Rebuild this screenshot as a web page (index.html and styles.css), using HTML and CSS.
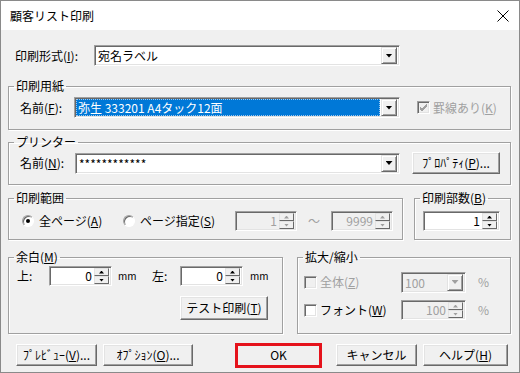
FILE: index.html
```html
<!DOCTYPE html>
<html lang="ja">
<head>
<meta charset="utf-8">
<title>顧客リスト印刷</title>
<link rel="stylesheet" href="styles.css">
</head>
<body>
<div class="window">
  <div class="titlebar">
    <span class="title">顧客リスト印刷</span>
    <svg class="close" width="12" height="12" viewBox="0 0 12 12"><path d="M0.5 0.5L11.5 11.5M11.5 0.5L0.5 11.5" stroke="#000" stroke-width="1"/></svg>
  </div>
  <div class="content">
    <div class="row row-format">
      <span class="lbl lbl-format">印刷形式(<u>I</u>):</span>
      <div class="combo w-format"><span class="combo-text">宛名ラベル</span><span class="drop"><i class="tri-down"></i></span></div>
    </div>

    <fieldset class="group g-paper">
      <legend>印刷用紙</legend>
      <div class="group-body row body-paper">
        <span class="lbl lbl-name">名前(<u>F</u>):</span>
        <div class="combo w-name1"><span class="combo-text selected">弥生 333201 A4タック12面</span><span class="drop"><i class="tri-down"></i></span></div>
        <div class="check disabled ml-check"><span class="box"><svg width="9" height="9" viewBox="0 0 9 9"><path d="M1 4l2 2 5-5M1 5l2 2 5-5M1 6l2 2 5-5" stroke="#a0a0a0" stroke-width="1" fill="none"/></svg></span><span class="check-lbl">罫線あり(<u>K</u>)</span></div>
      </div>
    </fieldset>

    <fieldset class="group g-printer">
      <legend>プリンター</legend>
      <div class="group-body row body-printer">
        <span class="lbl lbl-name2">名前(<u>N</u>):</span>
        <div class="combo w-name2"><span class="combo-text">************</span><span class="drop"><i class="tri-down"></i></span></div>
        <div class="btn btn-prop">ﾌﾟﾛﾊﾟﾃｨ(<u>P</u>)...</div>
      </div>
    </fieldset>

    <div class="row-groups row3">
      <fieldset class="group g-range">
        <legend>印刷範囲</legend>
        <div class="group-body row body-range">
          <div class="radio-item item1"><span class="radio checked"></span><span class="radio-lbl">全ページ(<u>A</u>)</span></div>
          <div class="radio-item item2"><span class="radio"></span><span class="radio-lbl">ページ指定(<u>S</u>)</span></div>
          <div class="spin disabled w-range"><span class="spin-text">1</span><span class="spin-btns"><span class="sb"><i class="tri-up-s"></i></span><span class="sb"><i class="tri-down-s"></i></span></span></div>
          <span class="tilde">～</span>
          <div class="spin disabled w-range"><span class="spin-text">9999</span><span class="spin-btns"><span class="sb"><i class="tri-up-s"></i></span><span class="sb"><i class="tri-down-s"></i></span></span></div>
        </div>
      </fieldset>
      <fieldset class="group g-copies">
        <legend>印刷部数(<u>B</u>)</legend>
        <div class="group-body row body-copies">
          <div class="spin w-copies"><span class="spin-text">1</span><span class="spin-btns"><span class="sb"><i class="tri-up-s"></i></span><span class="sb"><i class="tri-down-s"></i></span></span></div>
        </div>
      </fieldset>
    </div>

    <div class="row-groups row4">
      <fieldset class="group g-margin">
        <legend>余白(<u>M</u>)</legend>
        <div class="group-body body-margin">
          <div class="row margin-row">
            <span class="lbl lbl-top">上:</span>
            <div class="spin w-margin"><span class="spin-text">0</span><span class="spin-btns"><span class="sb"><i class="tri-up-s"></i></span><span class="sb"><i class="tri-down-s"></i></span></span></div>
            <span class="mm mm1">mm</span>
            <span class="lbl lbl-left">左:</span>
            <div class="spin w-margin"><span class="spin-text">0</span><span class="spin-btns"><span class="sb"><i class="tri-up-s"></i></span><span class="sb"><i class="tri-down-s"></i></span></span></div>
            <span class="mm mm2">mm</span>
          </div>
          <div class="row test-row">
            <div class="btn btn-test">テスト印刷(<u>T</u>)</div>
          </div>
        </div>
      </fieldset>
      <fieldset class="group g-zoom">
        <legend>拡大/縮小</legend>
        <div class="group-body body-zoom">
          <div class="row zoom-row">
            <div class="check disabled zitem"><span class="box"></span><span class="check-lbl">全体(<u>Z</u>)</span></div>
            <div class="combo disabled w-zoom"><span class="combo-text">100</span><span class="drop"><i class="tri-down"></i></span></div>
            <span class="pct">%</span>
          </div>
          <div class="row zoom-row zoom-row2">
            <div class="check zitem"><span class="box"></span><span class="check-lbl">フォント(<u>W</u>)</span></div>
            <div class="spin disabled w-zoom"><span class="spin-text">100</span><span class="spin-btns"><span class="sb"><i class="tri-up-s"></i></span><span class="sb"><i class="tri-down-s"></i></span></span></div>
            <span class="pct">%</span>
          </div>
        </div>
      </fieldset>
    </div>

    <div class="row buttons">
      <div class="btn b-preview">ﾌﾟﾚﾋﾞｭｰ(<u>V</u>)...</div>
      <div class="btn b-option">ｵﾌﾟｼｮﾝ(<u>O</u>)...</div>
      <div class="btn b-ok">OK</div>
      <div class="btn b-cancel">キャンセル</div>
      <div class="btn b-help">ヘルプ(<u>H</u>)</div>
    </div>
  </div>
</div>
</body>
</html>
```

FILE: styles.css
```css
* { box-sizing: border-box; }
html, body { margin: 0; padding: 0; }
body {
  width: 520px; height: 373px; overflow: hidden;
  font-family: "Noto Sans CJK JP", "Noto Sans", sans-serif;
  font-size: 12px; line-height: 14px; color: #000; background: #fff;
}
u { text-decoration: underline; text-underline-offset: 1px; }

.window {
  width: 520px; height: 373px;
  border: 1px solid #8a8a8a;
  background: #f0f0f0;
  display: flex; flex-direction: column;
}
.titlebar {
  height: 29px; flex: none; background: #fff;
  display: flex; align-items: center; justify-content: space-between;
  padding: 0 10px 0 9px;
}
.title { font-size: 12px; }

.content { padding: 15px 8px 0 7px; display: flex; flex-direction: column; }

.row { display: flex; align-items: center; }
.lbl { flex: none; white-space: nowrap; }

/* first row */
.row-format { height: 21px; padding-left: 7px; }
.lbl-format { width: 79px; }
.w-format { width: 306px; }

/* fields */
.combo {
  flex: none; height: 21px; display: flex; align-items: center;
  background: #fff;
  border: 1px solid; border-color: #a0a0a0 #fff #fff #a0a0a0;
  box-shadow: inset 1px 1px 0 #696969, inset -1px -1px 0 #e3e3e3;
  padding: 1px 2px 1px 1px;
}
.combo-text { flex: 1; height: 17px; line-height: 17px; padding-left: 2px; white-space: nowrap; overflow: hidden; }
.combo-text.selected { background: #0078d7; color: #fff; outline: 1px dotted #9cc7ee; outline-offset: -1px; margin-right: 1px; }
.drop {
  flex: none; width: 16px; height: 17px;
  display: flex; align-items: center; justify-content: center;
  background: #f0f0f0;
  border: 1px solid; border-color: #e3e3e3 #696969 #696969 #e3e3e3;
  box-shadow: inset 1px 1px 0 #fff, inset -1px -1px 0 #a0a0a0;
}
.tri-down { display: block; width: 7px; height: 4px; background: #000; clip-path: polygon(0 0, 100% 0, 50% 100%); }
.combo.disabled { background: #f0f0f0; color: #a0a0a0; }
.combo.disabled .tri-down { background: #a0a0a0; }

.spin {
  flex: none; height: 20px; display: flex; align-items: center;
  background: #fff;
  border: 1px solid; border-color: #a0a0a0 #fff #fff #a0a0a0;
  box-shadow: inset 1px 1px 0 #696969, inset -1px -1px 0 #e3e3e3;
  padding: 1px 2px 1px 1px;
}
.spin-text { flex: 1; text-align: right; padding-right: 2px; line-height: 16px; }
.spin-btns { flex: none; width: 15px; height: 16px; display: flex; flex-direction: column; }
.sb {
  flex: 1; display: flex; align-items: center; justify-content: center;
  background: #f0f0f0;
  border: 1px solid; border-color: #e3e3e3 #696969 #696969 #e3e3e3;
}
.tri-up-s { display: block; width: 5px; height: 3px; background: #000; clip-path: polygon(50% 0, 100% 100%, 0 100%); }
.tri-down-s { display: block; width: 5px; height: 3px; background: #000; clip-path: polygon(0 0, 100% 0, 50% 100%); }
.spin.disabled { background: #f0f0f0; color: #a0a0a0; }
.spin.disabled .tri-up-s, .spin.disabled .tri-down-s { background: #a0a0a0; }

/* buttons */
.btn {
  flex: none; height: 22px;
  display: flex; align-items: center; justify-content: center;
  background: #f0f0f0; white-space: nowrap;
  border: 1px solid; border-color: #fff #696969 #696969 #fff;
  box-shadow: inset -1px -1px 0 #a0a0a0, inset 1px 1px 0 #e3e3e3;
}

/* group boxes */
.group {
  margin: 0; padding: 0; min-width: 0;
  border: 1px solid #a0a0a0;
  box-shadow: inset 1px 1px 0 #fff, 1px 1px 0 #fff;
}
.group legend { margin-left: 5px; padding: 0 2px; line-height: 14px; height: 14px; }

.g-paper { margin-top: 13px; }
.body-paper { padding: 4px 0 11px 11px; }
.lbl-name { width: 54px; }
.w-name1 { width: 326px; }
.check { display: flex; align-items: center; flex: none; }
.ml-check { margin-left: 17px; }
.box {
  flex: none; width: 13px; height: 13px; background: #fff;
  display: flex; align-items: center; justify-content: center;
  border: 1px solid; border-color: #a0a0a0 #fff #fff #a0a0a0;
  box-shadow: inset 1px 1px 0 #696969, inset -1px -1px 0 #e3e3e3;
}
.check.disabled .box { background: #f0f0f0; }
.check-lbl { margin-left: 3px; white-space: nowrap; }
.check.disabled .check-lbl { color: #a0a0a0; }

.g-printer { margin-top: 5px; }
.body-printer { padding: 3px 0 10px 11px; height: 35px; }
.lbl-name2 { width: 55px; }
.w-name2 { width: 325px; }
.btn-prop { width: 88px; margin-left: 12px; }

.row-groups { display: flex; }
.row3 { margin-top: 6px; }
.g-range { width: 395px; }
.g-copies { width: 97px; margin-left: 11px; }
.body-range { padding: 6px 0 8px 13px; height: 34px; }
.radio-item { display: flex; align-items: center; flex: none; }
.item1 { width: 101px; }
.item2 { width: 112px; }
.radio {
  flex: none; width: 12px; height: 12px; border-radius: 50%; background: #fff;
  border: 1px solid; border-color: #a0a0a0 #fff #fff #a0a0a0;
  box-shadow: inset 1px 1px 0 #696969;
  display: flex; align-items: center; justify-content: center;
}
.radio.checked::after { content: ""; width: 4px; height: 4px; border-radius: 50%; background: #000; }
.radio-lbl { margin-left: 5px; white-space: nowrap; }
.w-range { width: 62px; }
.tilde { width: 34px; text-align: center; color: #a0a0a0; flex: none; }
.body-copies { padding: 6px 0 8px 8px; height: 34px; }
.w-copies { width: 77px; }

.row4 { margin-top: 10px; }
.g-margin { width: 275px; }
.g-zoom { width: 214px; margin-left: 14px; }
.body-margin { padding: 2px 0 13px 8px; }
.margin-row { height: 20px; }
.lbl-top { width: 32px; }
.w-margin { width: 63px; }
.mm { font-size: 10px; flex: none; }
.mm1 { width: 40px; padding-left: 6px; }
.mm2 { padding-left: 7px; }
.lbl-left { width: 28px; }
.test-row { margin-top: 10px; padding-left: 163px; }
.btn-test { width: 88px; height: 24px; }

.body-zoom { padding: 8px 0 13px 6px; }
.zoom-row { height: 20px; }
.zoom-row2 { margin-top: 8px; }
.zitem { width: 97px; }
.w-zoom { width: 65px; }
.pct { margin-left: 12px; color: #a0a0a0; }

.buttons { margin-top: 10px; height: 22px; }
.b-preview { width: 81px; margin-left: 8px; }
.b-option { width: 90px; margin-left: 6px; }
.b-ok { width: 87px; height: 25px; margin-left: 42px; border: 3px solid #e5121b; box-shadow: none; }
.b-cancel { width: 81px; margin-left: 14px; }
.b-help { width: 85px; margin-left: 6px; }
```
